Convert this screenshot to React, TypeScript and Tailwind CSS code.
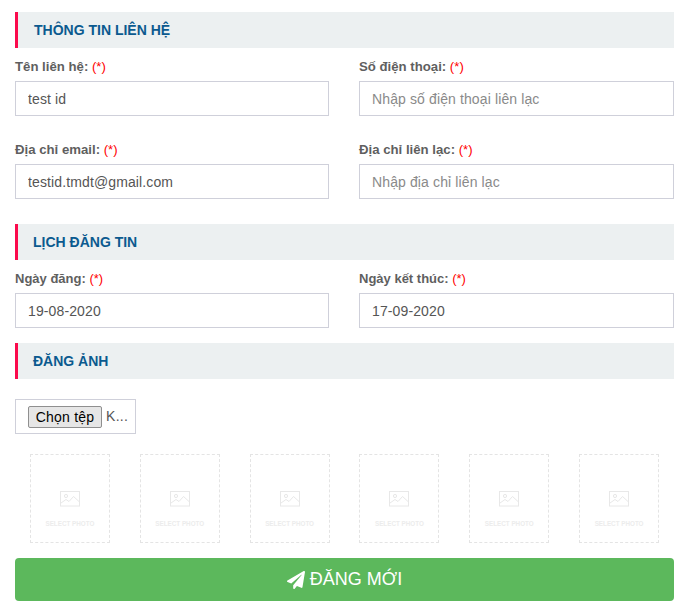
import React from 'react';
import { FaPaperPlane } from 'react-icons/fa';

const Section = ({ title, inset }: { title: string; inset?: boolean }) => (
  <div className={`h-9 bg-[#ecf0f1] border-l-[3px] border-[#fb0a4c] flex items-center ${inset ? 'pl-[15px]' : 'pl-[16px]'}`}>
    <h3 className="text-[14px] font-bold uppercase text-[#0b5a8f]">{title}</h3>
  </div>
);

const Field = ({ label, value, placeholder, tight }: { label: string; value?: string; placeholder: string; tight?: boolean }) => (
  <div>
    <label className={`block h-[22px] leading-[15px] font-bold text-[#5f5f5f] ${tight ? 'text-[13px]' : 'text-[13.2px]'}`}>
      {label}: <span className="font-normal text-[#ff0000]">(*)</span>
    </label>
    <input
      readOnly
      value={value ?? ''}
      placeholder={placeholder}
      className="block w-full h-[35px] px-3 border border-[#cfd0da] bg-white text-[14px] tracking-[0.12px] text-[#555555] placeholder:text-[#8a8a8a] outline-none"
    />
  </div>
);

const PhotoSlot = () => (
  <div className="flex justify-center">
    <div className="w-20 h-[89px] border border-dashed border-[#e4e4e4] flex flex-col items-center pt-[36px]">
      <svg width="20" height="16" viewBox="0 0 20 16" fill="none" stroke="#e8e8e8" strokeWidth="1">
        <rect x="0.5" y="0.5" width="19" height="14.5" />
        <circle cx="6" cy="5" r="1.6" />
        <path d="M1 12l5-3.5 3 2 4.5-5 5.5 5" />
      </svg>
      <span className="mt-[12px] text-[6.3px] leading-[9px] font-bold text-[#ececec]">SELECT PHOTO</span>
    </div>
  </div>
);

const App: React.FC = () => {
  return (
    <div className="h-[611px] bg-white pl-[15px] pr-[13px] pt-3 font-['Liberation_Sans',Arial,sans-serif]">
      <Section title="Thông tin liên hệ" />
      <div className="grid grid-cols-[314px_315px] gap-x-[30px] gap-y-[26px] mt-[11px]">
        <Field label="Tên liên hệ" value="test id" placeholder="" />
        <Field label="Số điện thoại" placeholder="Nhập số điện thoại liên lạc" />
        <Field label="Địa chỉ email" value="testid.tmdt@gmail.com" placeholder="" />
        <Field label="Địa chỉ liên lạc" placeholder="Nhập địa chỉ liên lạc" />
      </div>

      <div className="mt-[25px]">
        <Section title="Lịch đăng tin" inset />
      </div>
      <div className="grid grid-cols-[314px_315px] gap-x-[30px] mt-[11px]">
        <Field label="Ngày đăng" value="19-08-2020" placeholder="" tight />
        <Field label="Ngày kết thúc" value="17-09-2020" placeholder="" tight />
      </div>

      <div className="mt-[15px]">
        <Section title="Đăng ảnh" inset />
      </div>
      <div className="mt-5 w-[121px] h-[35px] border border-[#cfd0da] pl-3 flex items-center text-[14px] text-[#555555]">
        <button className="h-[22px] w-[74px] shrink-0 rounded-[2px] border border-[#8f8f8f] bg-[#e6e6e6] text-[14px] tracking-[0.2px] text-black">
          Chọn tệp
        </button>
        <span className="ml-1 tracking-[0.3px]">K...</span>
      </div>

      <div className="grid grid-cols-6 mt-5">
        <PhotoSlot />
        <PhotoSlot />
        <PhotoSlot />
        <PhotoSlot />
        <PhotoSlot />
        <PhotoSlot />
      </div>

      <button className="mt-[15px] w-full h-[43px] rounded-[4px] bg-[#5cb85c] text-white text-[18px] flex items-center justify-center gap-[5px]">
        <FaPaperPlane className="text-[18px]" />
        ĐĂNG MỚI
      </button>
    </div>
  );
};

export default App;
